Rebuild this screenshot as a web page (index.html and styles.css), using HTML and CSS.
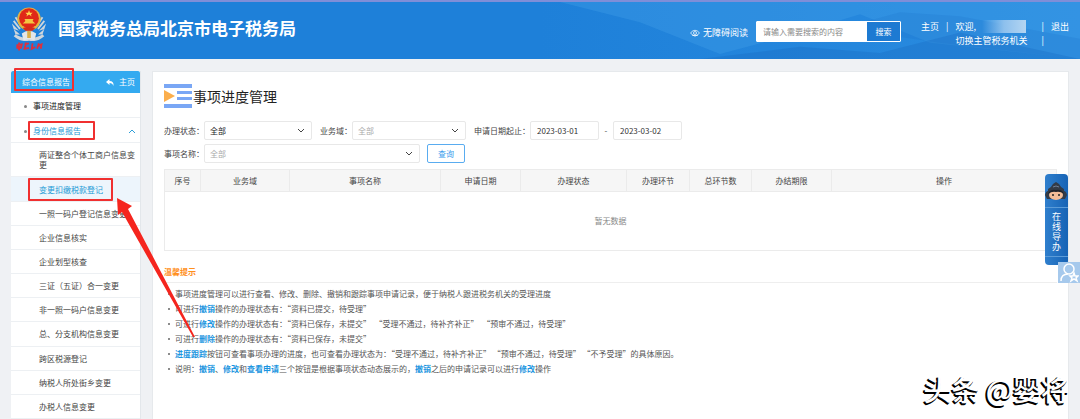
FILE: index.html
```
<!DOCTYPE html>
<html lang="zh-CN">
<head>
    <meta charset="UTF-8">
    <title>国家税务总局北京市电子税务局</title>
    <link rel="stylesheet" href="styles.css">
</head>
<body>
    <header class="header">
        <svg class="mountains" viewBox="0 0 1080 56" preserveAspectRatio="none" aria-hidden="true">
            <path d="M560 0 L640 20 L720 51 L800 30 L860 12 L930 40 L1080 56 L1080 0Z" fill="#4aa6ea" opacity=".3"/>
            <path d="M700 56 L800 44 L880 50 L960 30 L1080 56Z" fill="#1768bd" opacity=".3"/>
            <path d="M840 26 L900 10 L960 14 L1080 36 L1080 56 L940 40Z" fill="#1a70c8" opacity=".2"/>
        </svg>
        <svg class="logo" viewBox="0 0 40 50" aria-hidden="true">
            <path d="M1 19 L9 27 L3 25 L10 31 L5 31 Q12 35 20 35 Q28 35 35 31 L30 31 L37 25 L31 27 L39 19 L35 31 L37 33 Q29 40 20 38 Q11 40 3 33 L5 31Z" fill="#cfd6dc"/>
            <path d="M5 12 L11 21 M3 16 L10 25 M35 12 L29 21 M37 16 L30 25" stroke="#cfd6dc" stroke-width="2"/>
            <path d="M12 30 Q20 24 28 30 L26 38 Q20 35 14 38Z" fill="#e3e6e8"/>
            <path d="M18 27 H22 V35 H18Z" fill="#d9ae4a"/>
            <circle cx="20" cy="14" r="13" fill="#e4b343"/>
            <circle cx="20" cy="13" r="11" fill="#e02818"/>
            <path d="M20 4 L21 7 L24 7 L22 9 L23 11 L20 9 L17 11 L18 9 L16 7 L19 7Z" fill="#ffd84d"/>
            <path d="M15 14 L25 14 L24 16 L27 19 L13 19 L16 16Z" fill="#f4c542"/>
            <path d="M13 24 L20 22 L27 24 L24 27 L16 27Z" fill="#d42a1c"/>
            <path d="M7 43 L12 42 L11 46 L7 46Z M9 40 L9 49 M15 42 L20 41 M17 40 L15 47 L20 46 M24 41 L23 47 L27 45 M31 41 L29 47 M30 44 L34 42 L33 47" fill="none" stroke="#e0303c" stroke-width="2"/>
        </svg>
        <h1 class="site-name">国家税务总局北京市电子税务局</h1>
        <a class="reader" href="#">
            <svg viewBox="0 0 20 14" aria-hidden="true">
                <path d="M1 7 Q10 -4 19 7 Q10 18 1 7Z M4 11 Q10 15 16 11" fill="none" stroke="#fff" stroke-width="1.5"/>
                <circle cx="10" cy="7" r="3" fill="none" stroke="#fff" stroke-width="1.5"/>
            </svg>
            无障碍阅读
        </a>
        <form class="search">
            <input type="text" aria-label="搜索" placeholder="请输入需要搜索的内容">
            <button type="button">搜索</button>
        </form>
        <nav class="user">
            <a href="#">主页</a>
            <span>|</span>
            <div class="welcome">
                <div class="name-line">欢迎,<span class="name"></span></div>
                <a href="#">切换主管税务机关</a>
            </div>
            <div class="bars"><span>|</span><span>|</span></div>
            <a href="#">退出</a>
        </nav>
    </header>

    <div class="layout">
        <aside class="sidebar">
            <div class="side-head">
                <span>综合信息报告</span>
                <a href="#">
                    <svg viewBox="0 0 16 14" aria-hidden="true"><path d="M7 0 L0 6 L7 12 L7 8 Q13 8 15 14 Q16 4 7 4Z" fill="#fff"/></svg>
                    主页
                </a>
            </div>
            <ul class="menu">
                <li class="top"><a href="#">事项进度管理</a></li>
                <li class="top open">
                    <a href="#">身份信息报告</a>
                    <svg viewBox="0 0 8 5" aria-hidden="true"><path d="M1 4 L4 1 L7 4" fill="none" stroke="#2f9fd8"/></svg>
                </li>
                <li><a href="#">两证整合个体工商户信息变更</a></li>
                <li class="active"><a href="#">变更扣缴税款登记</a></li>
                <li><a href="#">一照一码户登记信息变更</a></li>
                <li><a href="#">企业信息核实</a></li>
                <li><a href="#">企业划型核查</a></li>
                <li><a href="#">三证（五证）合一变更</a></li>
                <li><a href="#">非一照一码户信息变更</a></li>
                <li><a href="#">总、分支机构信息变更</a></li>
                <li><a href="#">跨区税源登记</a></li>
                <li><a href="#">纳税人所处街乡变更</a></li>
                <li><a href="#">办税人信息变更</a></li>
            </ul>
        </aside>

        <main class="main">
            <h2 class="page-title">
                <svg viewBox="0 0 28 24" aria-hidden="true">
                    <path d="M0 0H28V4H0Z M13 7H28V10H13Z M13 13H28V16H13Z M0 20H28V24H0Z" fill="#7aa7f5"/>
                    <path d="M0 6 L11 12 L0 18Z" fill="#fbae4c"/>
                </svg>
                事项进度管理
            </h2>
            <form class="filters">
                <div class="row">
                    <label for="status">办理状态：</label>
                    <select id="status" class="dark"><option>全部</option></select>
                    <label for="domain" class="next">业务域：</label>
                    <select id="domain" class="mid"><option>全部</option></select>
                    <label for="from" class="next">申请日期起止：</label>
                    <input id="from" type="text" value="2023-03-01">
                    <span class="dash">-</span>
                    <input type="text" aria-label="截止日期" value="2023-03-02">
                </div>
                <div class="row">
                    <label for="item">事项名称：</label>
                    <select id="item" class="wide"><option>全部</option></select>
                    <button type="button">查询</button>
                </div>
            </form>

            <table class="grid">
                <colgroup>
                    <col class="c-no"><col class="c-domain"><col class="c-name"><col class="c-date"><col class="c-status">
                    <col class="c-step"><col class="c-count"><col class="c-limit"><col>
                </colgroup>
                <thead>
                    <tr>
                        <th>序号</th><th>业务域</th><th>事项名称</th><th>申请日期</th><th>办理状态</th>
                        <th>办理环节</th><th>总环节数</th><th>办结期限</th><th>操作</th>
                    </tr>
                </thead>
                <tbody>
                    <tr><td colspan="9">暂无数据</td></tr>
                </tbody>
            </table>

            <section class="tips">
                <h3>温馨提示</h3>
                <ul>
                    <li>事项进度管理可以进行查看、修改、删除、撤销和跟踪事项申请记录，便于纳税人跟进税务机关的受理进度</li>
                    <li>可进行<b>撤销</b>操作的办理状态有：“资料已提交，待受理”</li>
                    <li>可进行<b>修改</b>操作的办理状态有：“资料已保存，未提交”  “受理不通过，待补齐补正”  “预审不通过，待受理”</li>
                    <li>可进行<b>删除</b>操作的办理状态有：“资料已保存，未提交”</li>
                    <li><b>进度跟踪</b>按钮可查看事项办理的进度，也可查看办理状态为：“受理不通过，待补齐补正” “预审不通过，待受理” “不予受理”的具体原因。</li>
                    <li>说明：<b>撤销</b>、<b>修改</b>和<b>查看申请</b>三个按钮是根据事项状态动态展示的，<b>撤销</b>之后的申请记录可以进行<b>修改</b>操作</li>
                </ul>
            </section>
        </main>
    </div>

    <a class="guide" href="#">
        <svg viewBox="0 0 22 20" aria-hidden="true">
            <path d="M0 13 Q1 9 3 9 L3 7 Q6 6 8 2 L11 0 L14 2 Q16 6 19 7 L19 9 Q21 9 22 13 L20 17 L2 17Z" fill="#333b48"/>
            <ellipse cx="11" cy="13" rx="7" ry="5" fill="#f3bd98"/>
            <path d="M3 12 Q5 7 11 8 Q17 7 19 12 Q15 9 11 10 Q7 9 3 12Z" fill="#20242c"/>
            <path d="M8 5 Q11 3 14 5" fill="none" stroke="#6f7f96"/>
            <circle cx="8" cy="13" r="1" fill="#222"/><circle cx="14" cy="13" r="1" fill="#222"/>
        </svg>
        <span>在线导办</span>
    </a>
    <a class="favorite" href="#" aria-label="我的收藏">
        <svg viewBox="0 0 20 20" aria-hidden="true">
            <circle cx="10" cy="6" r="5" fill="none" stroke="#fff" stroke-width="1.5"/>
            <path d="M2 18 Q2 11 9 11 M15 10 L16 13 L19 13 L17 15 L18 18 L15 16 L12 18 L13 15 L11 13 L14 13Z" fill="none" stroke="#fff" stroke-width="1.5"/>
        </svg>
    </a>

    <div class="mark mark-head"></div>
    <div class="mark mark-group"></div>
    <div class="mark mark-item"></div>
    <svg class="arrow" viewBox="0 0 80 142" aria-hidden="true">
        <path d="M0 0 L15 8 L11 11 L78 139 L76 139 L5 14 L1 17Z" fill="#f5251e"/>
    </svg>
    <div class="watermark">头条 @婴将</div>
</body>
</html>
```

FILE: styles.css
```
* {
    box-sizing: border-box;
}

body {
    margin: 0;
    height: 100vh;
    display: flex;
    flex-direction: column;
    overflow: hidden;
    position: relative;
    background-color: #eff1f4;
    color: #444;
    font-family: "Noto Sans CJK SC", "Noto Sans", sans-serif;
    font-size: 8px;
    line-height: 10px;
}

a {
    color: inherit;
    text-decoration: none;
}

ul {
    list-style: none;
    margin: 0;
    padding: 0;
}

input, select, button {
    font: inherit;
    margin: 0;
}

/* 顶部 */
.header {
    position: relative;
    display: flex;
    align-items: flex-start;
    height: 59px;
    padding: 0 11px;
    border-top: 2px solid #7f8ed8;
    background: linear-gradient(90deg, #1e80d9 50%, #2a8ce0);
    color: #fff;
    font-size: 9px;
    line-height: 14px;
    flex-shrink: 0;
}

.mountains {
    position: absolute;
    left: 0;
    top: 0;
    width: 100%;
    height: 100%;
}

.header > :not(.mountains) {
    position: relative;
}

.logo {
    width: 36px;
    height: 48px;
    margin-top: 3px;
}

.site-name {
    margin: 14px auto 0 11px;
    font-size: 17px;
    line-height: 24px;
    font-weight: bold;
}

.reader {
    display: flex;
    align-items: center;
    gap: 3px;
    margin: 24px 8px 0 0;
}

.reader svg {
    width: 10px;
    height: 8px;
}

.search {
    display: flex;
    width: 145px;
    height: 21px;
    margin: 19px 20px 0 0;
    border: 1px solid #fff;
    border-radius: 1px;
    font-size: 8px;
}

.search input {
    flex: 1;
    min-width: 0;
    border: 0;
    padding: 0 6px;
    background-color: #fff;
}

.search input::placeholder {
    color: #888;
}

.search button {
    width: 33px;
    border: 0;
    padding: 0;
    background-color: #1d7ad2;
    color: #fff;
}

.user {
    display: flex;
    gap: 7px;
    margin-top: 18px;
}

.welcome {
    width: 79px;
}

.name-line {
    display: flex;
    gap: 6px;
}

.name {
    width: 44px;
    height: 13px;
    background: linear-gradient(90deg, transparent, #8dc0ed, #b4d5f2);
}

.bars {
    display: flex;
    flex-direction: column;
}

/* 左侧菜单 */
.layout {
    flex: 1;
    display: flex;
    gap: 11px;
    padding: 12px 11px 0;
    min-height: 0;
}

.sidebar {
    width: 130px;
    display: flex;
    flex-direction: column;
    flex-shrink: 0;
    background-color: #fff;
    border-right: 1px solid #e3e7eb;
}

.side-head {
    display: flex;
    justify-content: space-between;
    align-items: center;
    height: 22px;
    padding: 0 5px 0 11px;
    border-radius: 2px 2px 0 0;
    background-color: #34aaf0;
    color: #fff;
}

.side-head a {
    display: flex;
    align-items: center;
    gap: 5px;
}

.side-head svg {
    width: 8px;
    height: 7px;
}

.menu {
    flex: 1;
    display: flex;
    flex-direction: column;
}

.menu li {
    flex: 1 0 auto;
    display: flex;
    align-items: center;
    padding: 7px 4px 6px 28px;
    border-bottom: 1px solid #edf0f3;
}

.menu .top {
    justify-content: space-between;
    padding: 8px 4px 6px 13px;
    color: #222;
}

.menu .top::before {
    content: "";
    width: 3px;
    height: 3px;
    margin-right: 6px;
    border-radius: 50%;
    background-color: #888;
}

.menu .top a {
    flex: 1;
}

.menu .top svg {
    width: 8px;
    height: 5px;
}

.menu .open, .menu .active {
    color: #1b9ad6;
}

.menu .active {
    background-color: #edf5fc;
}

/* 主内容 */
.main {
    flex: 1;
    min-width: 0;
    padding: 12px 11px;
    border: 1px solid #e6e9ec;
    border-bottom: 0;
    background-color: #fff;
}

.page-title {
    display: flex;
    align-items: center;
    gap: 1px;
    margin: 0 0 13px;
    color: #222;
    font-size: 14px;
    line-height: 24px;
    font-weight: normal;
}

.page-title svg {
    width: 28px;
    height: 24px;
}

.filters {
    display: flex;
    flex-direction: column;
    gap: 4px;
    margin-bottom: 6px;
}

.row {
    display: flex;
    align-items: center;
}

.row .next {
    margin-left: 8px;
}

.row select, .row input {
    height: 19px;
    border: 1px solid #e8e8e8;
    border-radius: 2px;
    background-color: #fff;
    color: #aaa;
}

.row select {
    appearance: none;
    width: 108px;
    padding: 0 5px;
    background-image: url("data:image/svg+xml,%3Csvg xmlns='http://www.w3.org/2000/svg' viewBox='0 0 8 5'%3E%3Cpath d='M1 1L4 4L7 1' fill='none' stroke='%23444'/%3E%3C/svg%3E");
    background-repeat: no-repeat;
    background-position: right 6px center;
    background-size: 8px 5px;
}

.row .dark {
    color: #222;
}

.row .mid {
    width: 114px;
}

.row .wide {
    width: 216px;
}

.row input {
    width: 69px;
    padding: 0 6px;
    color: #333;
}

.dash {
    width: 14px;
    text-align: center;
}

.row button {
    width: 38px;
    height: 19px;
    margin-left: 7px;
    padding: 0;
    border: 1px solid #59acf0;
    border-radius: 2px;
    background-color: #fff;
    color: #3a9bec;
}

.grid {
    width: 100%;
    table-layout: fixed;
    border-collapse: collapse;
}

.grid th, .grid td {
    padding: 0;
    border: 1px solid #ebebeb;
    text-align: center;
    font-weight: normal;
}

.grid th {
    height: 22px;
    background-color: #f6f6f6;
}

.grid td {
    height: 59px;
    color: #888;
}

.c-no { width: 36px; }
.c-domain { width: 89px; }
.c-name { width: 151px; }
.c-date { width: 80px; }
.c-status { width: 106px; }
.c-step { width: 63px; }
.c-count { width: 62px; }
.c-limit { width: 80px; }

.tips h3 {
    margin: 16px 0 3px;
    padding-bottom: 5px;
    border-bottom: 1px solid #eee;
    color: #ff8f1c;
    font-size: 8px;
    font-weight: bold;
}

.tips li {
    display: flex;
    align-items: center;
    line-height: 15px;
    color: #555;
    white-space: pre;
}

.tips li::before {
    content: "";
    width: 2px;
    height: 2px;
    margin: 0 5px 0 4px;
    border-radius: 50%;
    background-color: #666;
}

.tips b {
    color: #1b95e0;
}

/* 右侧悬浮 */
.guide {
    position: absolute;
    right: 12px;
    top: 174px;
    width: 23px;
    height: 91px;
    border-radius: 4px;
    background: linear-gradient(90deg, #2f7fcd, #1763b5);
    color: #fff;
    font-size: 9px;
    line-height: 10px;
    text-align: center;
}

.guide svg {
    display: block;
    width: 22px;
    height: 20px;
    margin-top: 8px;
}

.guide span {
    display: block;
    margin-top: 5px;
    padding: 4px 7px;
    border-top: 1px solid #5b9bd8;
    border-bottom: 1px solid #5b9bd8;
}

.favorite {
    position: absolute;
    right: 0;
    top: 262px;
    width: 22px;
    height: 21px;
    background-color: #a6c9ec;
}

.favorite svg {
    display: block;
    width: 20px;
    height: 20px;
    margin: 1px;
}

/* 操作标注 */
.mark {
    position: absolute;
    border: 2px solid #f03030;
    border-radius: 1px;
}

.mark-head {
    left: 14px;
    top: 68px;
    width: 60px;
    height: 23px;
}

.mark-group {
    left: 28px;
    top: 121px;
    width: 67px;
    height: 19px;
}

.mark-item {
    left: 28px;
    top: 178px;
    width: 85px;
    height: 23px;
}

.arrow {
    position: absolute;
    left: 117px;
    top: 198px;
    width: 80px;
    height: 142px;
}

.watermark {
    position: absolute;
    right: 11px;
    bottom: 10px;
    color: #fff;
    font-size: 28px;
    line-height: 40px;
    font-weight: 500;
    text-shadow: -1px 1px 0 #000, -2px 1px 0 #000, -1px 2px 0 #000;
}
```
